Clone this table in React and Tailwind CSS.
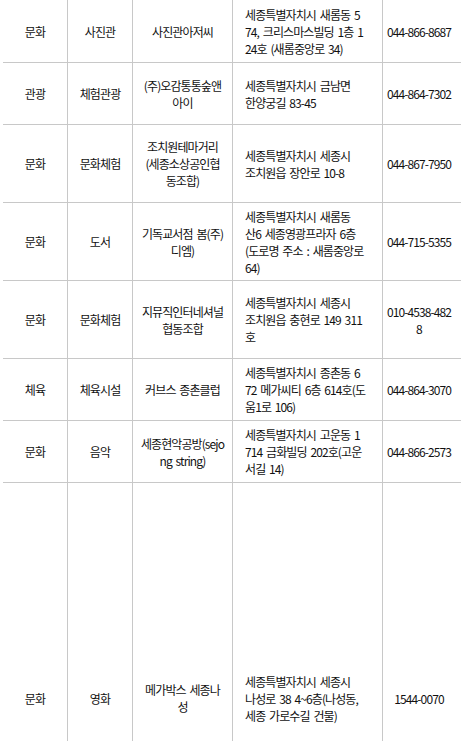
const rows = [
  {
    h: 'h-[63px]',
    cat: '문화',
    type: '사진관',
    name: ['사진관아저씨'],
    addr: ['세종특별자치시 새롬동 5', '74, 크리스마스빌딩 1층 1', '24호 (새롬중앙로 34)'],
    tel: ['044-866-8687'],
  },
  {
    h: 'h-[62px]',
    cat: '관광',
    type: '체험관광',
    name: ['(주)오감통통숲앤', '아이'],
    addr: ['세종특별자치시 금남면', '한양궁길 83-45'],
    tel: ['044-864-7302'],
  },
  {
    h: 'h-[78px]',
    cat: '문화',
    type: '문화체험',
    name: ['조치원테마거리', '(세종소상공인협', '동조합)'],
    addr: ['세종특별자치시 세종시', '조치원읍 장안로 10-8'],
    tel: ['044-867-7950'],
  },
  {
    h: 'h-[78px]',
    cat: '문화',
    type: '도서',
    name: ['기독교서점 봄(주)', '디엠)'],
    addr: ['세종특별자치시 새롬동', '산6 세종영광프라자 6층', '(도로명 주소 : 새롬중앙로', '64)'],
    tel: ['044-715-5355'],
  },
  {
    h: 'h-[78px]',
    cat: '문화',
    type: '문화체험',
    name: ['지뮤직인터네셔널', '협동조합'],
    addr: ['세종특별자치시 세종시', '조치원읍 충현로 149 311', '호'],
    tel: ['010-4538-482', '8'],
  },
  {
    h: 'h-[62px]',
    cat: '체육',
    type: '체육시설',
    name: ['커브스 종촌클럽'],
    addr: ['세종특별자치시 종촌동 6', '72 메가씨티 6층 614호(도', '움1로 106)'],
    tel: ['044-864-3070'],
  },
  {
    h: 'h-[62px]',
    cat: '문화',
    type: '음악',
    name: ['세종현악공방(sejo', 'ng string)'],
    addr: ['세종특별자치시 고운동 1', '714 금화빌딩 202호(고운', '서길 14)'],
    tel: ['044-866-2573'],
  },
  {
    h: 'h-[431px]',
    cat: '문화',
    type: '영화',
    name: ['메가박스 세종나', '성'],
    addr: ['세종특별자치시 세종시', '나성로 38 4~6층(나성동,', '세종 가로수길 건물)'],
    tel: ['1544-0070'],
  },
]

function Lines({ items }) {
  return items.map((t, i) => (
    <span key={i} className="block whitespace-nowrap">
      {t}
    </span>
  ))
}

export default function App() {
  return (
    <div className="bg-white min-h-screen overflow-hidden font-['Noto_Sans_CJK_KR','Noto_Sans',sans-serif] text-[12px] leading-[17px] tracking-[-0.9px] [word-spacing:2px] text-[#111]">
      <div className="ml-[3px]">
        {rows.map((r, i) => (
          <div
            key={i}
            className={`grid grid-cols-[64px_65px_100px_150px_1fr] border-b border-[#c8c8c8] ${r.h}`}
          >
            <div className="flex items-center justify-center text-center">{r.cat}</div>
            <div className="flex items-center justify-center text-center border-l border-[#c8c8c8]">{r.type}</div>
            <div className="flex flex-col items-center justify-center text-center border-l border-[#c8c8c8]">
              <Lines items={r.name} />
            </div>
            <div className="flex flex-col justify-center pl-[12px] border-l border-[#c8c8c8]">
              <Lines items={r.addr} />
            </div>
            <div className="flex flex-col items-center justify-center text-center border-l border-[#c8c8c8] pr-[6px]">
              <Lines items={r.tel} />
            </div>
          </div>
        ))}
      </div>
    </div>
  )
}
